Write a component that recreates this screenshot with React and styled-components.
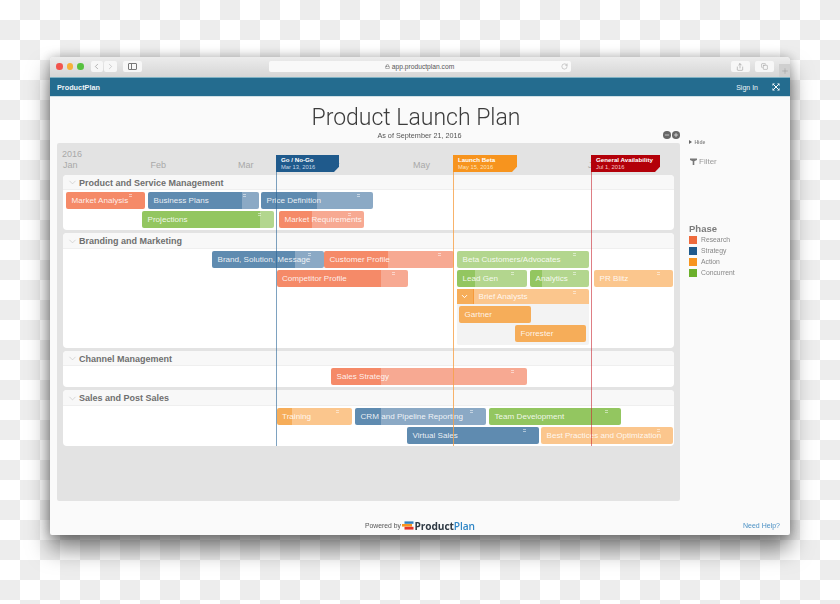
import React from "react";
import styled, { createGlobalStyle } from "styled-components";
import { ChevronLeft, ChevronRight, RotateCw, Share, Copy, Plus, Minus, ChevronDown, Lock } from "lucide-react";

const Global = createGlobalStyle`
  html, body { margin: 0; padding: 0; background: #fff; }
  * { box-sizing: border-box; }
`;

const Page = styled.div`
  width: 840px;
  height: 604px;
  overflow: hidden;
  padding: 57px 50px 0;
  font-family: "Liberation Sans", Arial, sans-serif;
  background-color: #fff;
  background-image: conic-gradient(#ededed 25%, #fff 0 50%, #ededed 0 75%, #fff 0);
  background-size: 40px 40px;
`;

const Window = styled.div`
  width: 740px;
  height: 478px;
  display: flex;
  flex-direction: column;
  background: #fafafa;
  border-radius: 4px 4px 2px 2px;
  box-shadow: 0 14px 22px rgba(0, 0, 0, 0.5), 0 0 12px rgba(0, 0, 0, 0.28);
  filter: blur(0.3px);
`;

const TitleBar = styled.div`
  height: 20px;
  flex: none;
  display: flex;
  align-items: flex-start;
  padding-top: 4px;
  position: relative;
  background: linear-gradient(#ececec, #d6d6d6);
  border-radius: 4px 4px 0 0;
`;

const Lights = styled.div`
  display: flex;
  gap: 4px;
  margin: 2px 0 0 6px;
`;

const Light = styled.span`
  width: 6.5px;
  height: 6.5px;
  border-radius: 50%;
  background: ${(p) => p.$c};
`;

const NavGroup = styled.div`
  display: flex;
  gap: 1px;
  margin-left: ${(p) => p.$ml}px;
`;

const ChromeBtn = styled.div`
  width: ${(p) => p.$w}px;
  height: 11px;
  display: flex;
  align-items: center;
  justify-content: center;
  background: #f7f7f7;
  border-radius: 2px;
  color: ${(p) => p.$c || "#777"};
`;

const UrlBar = styled.div`
  width: 302px;
  height: 11px;
  margin-left: 127px;
  display: flex;
  align-items: center;
  justify-content: center;
  position: relative;
  gap: 2px;
  background: #f9f9f9;
  border-radius: 2px;
  font-size: 6.7px;
  color: #555;
`;

const Reload = styled.span`
  position: absolute;
  right: 3px;
  top: 2px;
  display: flex;
  color: #888;
`;

const Tools = styled.div`
  margin-left: 160px;
  display: flex;
  gap: 5px;
`;

const NewTab = styled.div`
  position: absolute;
  right: 0;
  bottom: 0;
  width: 11px;
  height: 13px;
  display: flex;
  align-items: center;
  justify-content: center;
  background: #cfcfcf;
  color: #888;
`;

const PanelGlyph = styled.span`
  width: 9px;
  height: 6.5px;
  border: 1px solid #777;
  border-radius: 1px;
  background: linear-gradient(to right, #777 0 1px, transparent 1px);
  background-position: 2px 0;
  background-repeat: no-repeat;
`;

const NavBar = styled.div`
  height: 20px;
  flex: none;
  display: flex;
  align-items: center;
  padding: 0 10px 0 7px;
  background: #246c8f;
  color: #eef4f7;
  font-size: 7.3px;
  border-top: 1px solid #7fb2c4;
  border-bottom: 1px solid #cfe0e6;
`;

const Brand = styled.span`
  font-weight: 700;
  margin-right: auto;
`;

const SignIn = styled.span`
  font-size: 7px;
  margin-right: 14px;
`;

const Header = styled.div`
  height: 46px;
  flex: none;
  padding-top: 7px;
  display: flex;
  flex-direction: column;
  align-items: center;
  padding-right: 8px;
`;

const Title = styled.h1`
  margin: 0;
  font-family: Roboto, "Liberation Sans", sans-serif;
  font-weight: 300;
  font-size: 23px;
  line-height: 27px;
  color: #3c3c3c;
`;

const SubRow = styled.div`
  width: 718px;
  margin-left: 7px;
  margin-top: -1px;
  display: grid;
  grid-template-columns: 1fr auto 1fr;
  align-items: center;
  font-size: 7.25px;
  color: #555;
  height: 10px;
`;

const Zoomers = styled.div`
  grid-column: 3;
  justify-self: end;
  margin-right: 99px;
  display: flex;
  gap: 1.5px;
`;

const ZoomBtn = styled.span`
  width: 7.5px;
  height: 7.5px;
  border-radius: 50%;
  background: #666;
  color: #fff;
  display: flex;
  align-items: center;
  justify-content: center;
`;

const Content = styled.div`
  flex: 1;
  display: flex;
  padding-left: 7px;
`;

const Chart = styled.div`
  width: 623px;
  height: 358px;
  position: relative;
  padding: 0 6px;
  background: #e3e3e3;
  border-radius: 2px;
  display: flex;
  flex-direction: column;
`;

const Months = styled.div`
  height: 32px;
  flex: none;
  display: flex;
  flex-direction: column;
  justify-content: flex-end;
  padding-bottom: 4px;
  color: #a9a9a9;
  font-size: 9px;
  line-height: 11px;
`;

const Year = styled.div`
  margin-left: -1px;
`;

const MonthGrid = styled.div`
  display: grid;
  grid-template-columns: repeat(7, 87.5px);
`;

const Lanes = styled.div`
  display: flex;
  flex-direction: column;
  gap: 3px;
`;

const Lane = styled.section`
  width: 611px;
  height: ${(p) => p.$h}px;
  background: #fff;
  border-radius: 4px;
  overflow: hidden;
`;

const LaneHead = styled.div`
  height: ${(p) => p.$h}px;
  display: flex;
  align-items: center;
  gap: 1px;
  padding: 1px 0 0 4px;
  background: #f8f8f8;
  border-bottom: 1px solid #efefef;
  font-size: 9px;
  font-weight: 700;
  color: #6f6f6f;
`;

const LaneBody = styled.div`
  padding: 2px 0 0 3px;
  display: flex;
  flex-direction: column;
  gap: 2px;
`;

const Row = styled.div`
  display: flex;
  align-items: flex-start;
`;

const tones = {
  red: ["#f58a68", "#f7a992"],
  blue: ["#5f8bb0", "#8ba9c5"],
  green: ["#93c660", "#b3d68e"],
  orange: ["#f6ad59", "#fbc68d"],
};

const Bar = styled.div`
  flex: none;
  position: relative;
  height: 17px;
  width: ${(p) => p.$w}px;
  margin-left: ${(p) => p.$gap}px;
  padding-left: 5.5px;
  display: flex;
  align-items: center;
  white-space: nowrap;
  overflow: hidden;
  border-radius: 2px;
  font-size: 8.1px;
  color: rgba(255, 255, 255, 0.88);
  background: linear-gradient(
    to right,
    ${(p) => tones[p.$tone][0]} ${(p) => p.$dark}px,
    ${(p) => tones[p.$tone][1]} ${(p) => p.$dark}px
  );
  &::after {
    content: ${(p) => (p.$mark ? '""' : "none")};
    position: absolute;
    top: 2px;
    right: 13px;
    width: 3px;
    height: 3px;
    background: repeating-linear-gradient(rgba(255, 255, 255, 0.5) 0 1px, transparent 1px 2px);
  }
`;

const Group = styled.div`
  width: 132px;
  margin-left: 391px;
  display: flex;
  flex-direction: column;
`;

const GroupHead = styled.div`
  height: 14.5px;
  position: relative;
  display: flex;
  align-items: center;
  color: rgba(255, 255, 255, 0.88);
  font-size: 8.1px;
  background: #fbc68d;
  border-radius: 2px 2px 0 0;
  &::after {
    content: "";
    position: absolute;
    top: 2px;
    right: 13px;
    width: 3px;
    height: 3px;
    background: repeating-linear-gradient(rgba(255, 255, 255, 0.5) 0 1px, transparent 1px 2px);
  }
`;

const GroupToggle = styled.span`
  width: 16.5px;
  height: 100%;
  margin-right: 5px;
  display: flex;
  align-items: center;
  justify-content: center;
  background: #f6ad59;
  border-right: 1px solid #f79a3a;
  color: #fff;
`;

const GroupKids = styled.div`
  height: 41px;
  padding: 2.5px 2px 0;
  display: flex;
  flex-direction: column;
  gap: 1.5px;
  background: #f3f3f3;
  border-radius: 0 0 2px 2px;
`;

const Milestone = styled.div`
  position: absolute;
  left: ${(p) => p.$x}px;
  top: 11.5px;
  height: 291px;
  display: flex;
  flex-direction: column;
  pointer-events: none;
`;

const Flag = styled.div`
  width: ${(p) => p.$w}px;
  height: 17.5px;
  flex: none;
  padding: 1.5px 0 0 5px;
  background: ${(p) => p.$c};
  clip-path: polygon(0 0, 100% 0, 100% 70%, calc(100% - 5px) 100%, 0 100%);
  color: #fff;
  font-size: 6.2px;
  font-weight: 700;
  line-height: 7.5px;
  white-space: nowrap;
`;

const FlagDate = styled.div`
  font-weight: 400;
  font-size: 5.8px;
  color: ${(p) => p.$c};
`;

const MileLine = styled.div`
  width: 1px;
  flex: 1;
  background: ${(p) => p.$c};
`;

const Side = styled.aside`
  flex: 1;
  padding: 0 0 0 9px;
  display: flex;
  flex-direction: column;
`;

const Hide = styled.div`
  display: flex;
  align-items: center;
  gap: 2.5px;
  margin-top: -4px;
  height: 6px;
  font-size: 5px;
  font-weight: 700;
  color: #8a8a8a;
`;

const Tri = styled.span`
  width: 0;
  height: 0;
  border-left: 3px solid #666;
  border-top: 2px solid transparent;
  border-bottom: 2px solid transparent;
`;

const FilterRow = styled.div`
  display: flex;
  align-items: center;
  gap: 2px;
  margin-top: 12px;
  margin-left: 1px;
  font-size: 8px;
  color: #9a9a9a;
`;

const Phase = styled.div`
  margin-top: 58px;
  font-size: 9.5px;
  line-height: 10px;
  font-weight: 700;
  color: #7b7b7b;
`;

const Legend = styled.div`
  display: flex;
  flex-direction: column;
`;

const LegendItem = styled.div`
  height: 11px;
  display: flex;
  align-items: center;
  gap: 4px;
  font-size: 6.8px;
  color: #888;
`;

const Swatch = styled.span`
  width: 8px;
  height: 8px;
  background: ${(p) => p.$c};
`;

const Footer = styled.div`
  height: 19px;
  flex: none;
  margin-top: -19px;
  display: flex;
  align-items: center;
  padding: 0 10px 0 315px;
`;

const Powered = styled.span`
  font-size: 6.8px;
  color: #555;
  margin-right: 1.5px;
`;

const LogoWord = styled.span`
  font-size: 10.2px;
  font-weight: 700;
  font-family: "Open Sans", "Liberation Sans", sans-serif;
  letter-spacing: -0.1px;
  color: #2f3a44;
  margin-right: auto;
`;

const LogoPlan = styled.span`
  color: #2f86c6;
  font-weight: 600;
`;

const Help = styled.span`
  font-size: 7px;
  color: #4a90c4;
`;

const lanes = [
  {
    name: "Product and Service Management",
    h: 55,
    head: 15,
    rows: [
      [
        ["Market Analysis", 66, 145, 145, "red"],
        ["Business Plans", 148, 259, 242, "blue"],
        ["Price Definition", 261, 373, 317, "blue"],
      ],
      [
        ["Projections", 142, 273.5, 260, "green"],
        ["Market Requirements", 279, 364, 312, "red"],
      ],
    ],
  },
  {
    name: "Branding and Marketing",
    h: 115,
    head: 16,
    rows: [
      [
        ["Brand, Solution, Message", 212, 324, 295, "blue"],
        ["Customer Profile", 324, 454, 388, "red"],
        ["Beta Customers/Advocates", 457, 589, 457, "green"],
      ],
      [
        ["Competitor Profile", 276.5, 408, 381, "red"],
        ["Lead Gen", 457, 527, 475, "green"],
        ["Analytics", 530, 589, 542, "green"],
        ["PR Blitz", 594, 673, 594, "orange"],
      ],
    ],
    group: true,
  },
  {
    name: "Channel Management",
    h: 36,
    head: 15,
    rows: [[["Sales Strategy", 331, 527, 381, "red"]]],
  },
  {
    name: "Sales and Post Sales",
    h: 56,
    head: 16,
    rows: [
      [
        ["Training", 276.5, 352, 292, "orange"],
        ["CRM and Pipeline Reporting", 355, 486, 381, "blue"],
        ["Team Development", 489, 621, 621, "green"],
      ],
      [
        ["Virtual Sales", 407, 539, 539, "blue"],
        ["Best Practices and Optimization", 541, 673, 541, "orange"],
      ],
    ],
  },
];

const Expand = () => (
  <svg width="8" height="8" viewBox="0 0 8 8" fill="none" stroke="#fff" strokeWidth="1">
    <path d="M1.5 1.5L6.5 6.5M6.5 1.5L1.5 6.5" />
    <path d="M0.5 0.5h2.4L0.5 2.9zM7.5 0.5v2.4L5.1 0.5zM0.5 7.5v-2.4L2.9 7.5zM7.5 7.5h-2.4L7.5 5.1z" fill="#fff" stroke="none" />
  </svg>
);

const Funnel = () => (
  <svg width="7" height="7" viewBox="0 0 7 7">
    <path d="M0 0.5h7v1.4L4.3 3.2V7H2.7V3.2L0 1.9z" fill="#777" />
  </svg>
);

const Logo = () => (
  <svg width="12" height="9" viewBox="0 0 12 9">
    <rect x="2.5" y="0.4" width="9" height="2.4" fill="#2f7fbf" />
    <rect x="0" y="3" width="10" height="2.6" fill="#f7941e" />
    <rect x="2.5" y="5.8" width="9" height="2.8" fill="#e5352b" />
  </svg>
);

const BarRow = ({ items }) => {
  let end = 66;
  return (
    <Row>
      {items.map(([label, x0, x1, dark, tone]) => {
        const gap = x0 - end;
        end = x1;
        return (
          <Bar key={label} $w={x1 - x0} $gap={gap} $dark={dark - x0} $tone={tone} $mark>
            {label}
          </Bar>
        );
      })}
    </Row>
  );
};

export default function App() {
  return (
    <Page>
      <Global />
      <Window>
        <TitleBar>
          <Lights>
            <Light $c="#f2544d" />
            <Light $c="#f6b13a" />
            <Light $c="#57c13f" />
          </Lights>
          <NavGroup $ml={7}>
            <ChromeBtn $w={12.5}><ChevronLeft size={9} strokeWidth={1.4} /></ChromeBtn>
            <ChromeBtn $w={12.5} $c="#aaa"><ChevronRight size={9} strokeWidth={1.4} /></ChromeBtn>
          </NavGroup>
          <NavGroup $ml={6}>
            <ChromeBtn $w={19}><PanelGlyph /></ChromeBtn>
          </NavGroup>
          <UrlBar>
            <Lock size={5} strokeWidth={2} />
            app.productplan.com
            <Reload><RotateCw size={7} strokeWidth={1.3} /></Reload>
          </UrlBar>
          <Tools>
            <ChromeBtn $w={19}><Share size={8} strokeWidth={1.3} /></ChromeBtn>
            <ChromeBtn $w={19}><Copy size={7} strokeWidth={1.3} /></ChromeBtn>
          </Tools>
          <NewTab><Plus size={8} strokeWidth={1.2} /></NewTab>
        </TitleBar>
        <NavBar>
          <Brand>ProductPlan</Brand>
          <SignIn>Sign In</SignIn>
          <Expand />
        </NavBar>
        <Header>
          <Title>Product Launch Plan</Title>
          <SubRow>
            <span />
            <span>As of September 21, 2016</span>
            <Zoomers>
              <ZoomBtn><Minus size={6} strokeWidth={2.5} /></ZoomBtn>
              <ZoomBtn><Plus size={6} strokeWidth={2.5} /></ZoomBtn>
            </Zoomers>
          </SubRow>
        </Header>
        <Content>
          <Chart>
            <Months>
              <Year>2016</Year>
              <MonthGrid>
                {["Jan", "Feb", "Mar", "Apr", "May", "Jun", "Jul"].map((m) => (
                  <span key={m}>{m}</span>
                ))}
              </MonthGrid>
            </Months>
            <Lanes>
              {lanes.map((lane) => (
                <Lane key={lane.name} $h={lane.h}>
                  <LaneHead $h={lane.head}>
                    <ChevronDown size={11} strokeWidth={1.2} color="#bbb" />
                    {lane.name}
                  </LaneHead>
                  <LaneBody>
                    {lane.rows.map((r, i) => (
                      <BarRow key={i} items={r} />
                    ))}
                    {lane.group && (
                      <Group>
                        <GroupHead>
                          <GroupToggle><ChevronDown size={9} strokeWidth={2.6} /></GroupToggle>
                          Brief Analysts
                        </GroupHead>
                        <GroupKids>
                          <Bar $w={71.5} $gap={0} $dark={72} $tone="orange">Gartner</Bar>
                          <Bar $w={71} $gap={56} $dark={71} $tone="orange">Forrester</Bar>
                        </GroupKids>
                      </Group>
                    )}
                  </LaneBody>
                </Lane>
              ))}
            </Lanes>
            <Milestone $x={219}>
              <Flag $w={63} $c="#1f5a8c">
                Go / No-Go
                <FlagDate $c="#c9d9e6">Mar 13, 2016</FlagDate>
              </Flag>
              <MileLine $c="rgba(40, 100, 150, 0.6)" />
            </Milestone>
            <Milestone $x={396}>
              <Flag $w={64} $c="#f7941e">
                Launch Beta
                <FlagDate $c="#fde2bd">May 15, 2016</FlagDate>
              </Flag>
              <MileLine $c="rgba(246, 160, 70, 0.8)" />
            </Milestone>
            <Milestone $x={534}>
              <Flag $w={69} $c="#b30009">
                General Availability
                <FlagDate $c="#f4c8c8">Jul 1, 2016</FlagDate>
              </Flag>
              <MileLine $c="rgba(200, 40, 50, 0.6)" />
            </Milestone>
          </Chart>
          <Side>
            <Hide><Tri />Hide</Hide>
            <FilterRow><Funnel />Filter</FilterRow>
            <Phase>Phase</Phase>
            <Legend>
              <LegendItem><Swatch $c="#ee6a3c" />Research</LegendItem>
              <LegendItem><Swatch $c="#1f5a8c" />Strategy</LegendItem>
              <LegendItem><Swatch $c="#f7941e" />Action</LegendItem>
              <LegendItem><Swatch $c="#6cb02c" />Concurrent</LegendItem>
            </Legend>
          </Side>
        </Content>
        <Footer>
          <Powered>Powered by</Powered>
          <Logo />
          <LogoWord>Product<LogoPlan>Plan</LogoPlan></LogoWord>
          <Help>Need Help?</Help>
        </Footer>
      </Window>
    </Page>
  );
}
